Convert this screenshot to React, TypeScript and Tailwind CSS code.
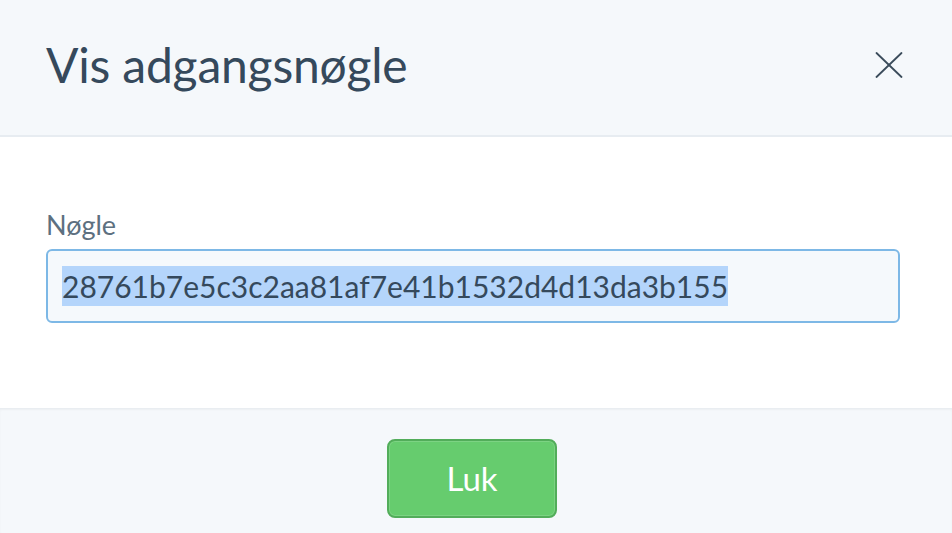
const font = { fontFamily: "Lato, 'Open Sans', sans-serif" };

export default function App() {
  const accessKey = "28761b7e5c3c2aa81af7e41b1532d4d13da3b155";

  return (
    <div className="flex h-[533px] w-[952px] flex-col overflow-hidden bg-white text-[#35495c]" style={font}>
      <div className="flex h-[137px] shrink-0 items-center justify-between border-b-2 border-[#e7ecf1] bg-[#f5f8fb] pl-[46px] pr-[49px]">
        <h1 className="pb-[6px] text-[48px] leading-none font-normal tracking-[-0.2px] text-[#35495c]">
          Vis adgangsnøgle
        </h1>
        <button type="button" className="mb-[6px] grid h-[28px] w-[28px] place-items-center text-[#3b4c5b]">
          <svg width="28" height="26" viewBox="0 0 28 26" fill="none" stroke="currentColor" strokeWidth="1.8" strokeLinecap="round">
            <path d="M1.5 1 L26.5 25" />
            <path d="M26.5 1 L1.5 25" />
          </svg>
        </button>
      </div>

      <div className="flex h-[271px] shrink-0 flex-col pl-[46px] pr-[52px] pt-[72px]">
        <label className="mb-[8px] text-[27px] leading-[32px] text-[#5d7080]">Nøgle</label>
        <div className="flex h-[74px] items-center rounded-[6px] border-2 border-[#7db8e6] bg-[#f5f9fc] px-[14px]">
          <span className="bg-[#b4d5fb] text-[30px] leading-[40px] text-[#35495c]">{accessKey}</span>
        </div>
      </div>

      <div className="flex flex-1 justify-center border-t border-[#e9edf1] bg-[#f5f8fb] pr-[8px] pt-[30px] shadow-[inset_0_1px_2px_rgba(0,0,0,0.04)]">
        <button
          type="button"
          className="h-[79px] w-[170px] rounded-[8px] border-2 border-[#52ad5a] bg-[#66cc6e] text-[33px] text-white shadow-[inset_0_0_0_1px_rgba(255,255,255,0.15)]"
        >
          Luk
        </button>
      </div>
    </div>
  );
}
